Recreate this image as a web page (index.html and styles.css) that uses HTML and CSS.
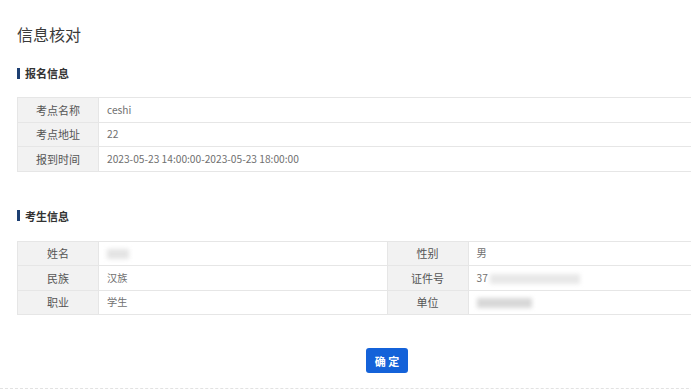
FILE: index.html
```html
<!DOCTYPE html>
<html lang="zh-CN">
<head>
<meta charset="utf-8">
<title>信息核对</title>
<link rel="stylesheet" href="styles.css">
</head>
<body>
<div class="page">
  <h1 class="title">信息核对</h1>

  <h2 class="section-head">报名信息</h2>
  <table class="info-table">
    <tr><th>考点名称</th><td>ceshi</td></tr>
    <tr><th>考点地址</th><td>22</td></tr>
    <tr><th>报到时间</th><td>2023-05-23 14:00:00-2023-05-23 18:00:00</td></tr>
  </table>

  <h2 class="section-head second">考生信息</h2>
  <table class="info-table four">
    <tr><th>姓名</th><td><span class="blur b-name"></span></td><th>性别</th><td>男</td></tr>
    <tr><th>民族</th><td>汉族</td><th>证件号</th><td>37<span class="blur b-id"></span></td></tr>
    <tr><th>职业</th><td>学生</td><th>单位</th><td><span class="blur b-unit"></span></td></tr>
  </table>

  <div class="actions">
    <button class="btn-primary" type="button">确 定</button>
  </div>
</div>
</body>
</html>
```

FILE: styles.css
```css
html, body {
  margin: 0;
  padding: 0;
  background: #fff;
  overflow: hidden;
}
body {
  font-family: "Noto Sans CJK SC", sans-serif;
  color: #333;
}
.page {
  width: 740px;
  padding: 22px 17px 0;
  border-bottom: 1px dashed #e2e2e2;
  height: 366px;
}
.title {
  margin: 0;
  font-size: 16px;
  font-weight: normal;
  line-height: 24px;
  color: #3a3a3a;
}
.section-head {
  margin: 20px 0 17px;
  font-size: 11px;
  font-weight: bold;
  line-height: 14px;
  color: #333;
  display: flex;
  align-items: center;
}
.section-head::before {
  content: "";
  width: 3px;
  height: 11px;
  background: #1d3f72;
  margin-right: 5px;
}
.section-head.second {
  margin-top: 37px;
  margin-bottom: 18px;
}
.info-table {
  width: 740px;
  border-collapse: collapse;
  table-layout: fixed;
  font-size: 11px;
}
.info-table th,
.info-table td {
  border: 1px solid #e6e6e6;
  height: 23.5px;
  padding: 0;
  line-height: 14px;
}
.info-table th {
  width: 80px;
  background: #f2f2f2;
  font-weight: normal;
  color: #555;
  text-align: center;
}
.info-table td {
  padding-left: 8px;
  color: #707070;
  font-size: 10.2px;
  text-align: left;
}
.blur {
  display: inline-block;
  vertical-align: middle;
  background: #e8e8e8;
  filter: blur(2px);
  height: 10px;
}
.b-name { width: 22px; background: #e4e4e4; }
.b-id { width: 90px; margin-left: 2px; }
.b-unit { width: 55px; background: #d8d8d8; }
.actions {
  display: flex;
  justify-content: center;
  margin-top: 33px;
}
.btn-primary {
  width: 42px;
  height: 25px;
  border: none;
  border-radius: 3px;
  background: #1462d9;
  color: #fff;
  font-size: 11px;
  font-weight: bold;
  padding: 0;
  font-family: "Noto Sans CJK SC", sans-serif;
}
```
